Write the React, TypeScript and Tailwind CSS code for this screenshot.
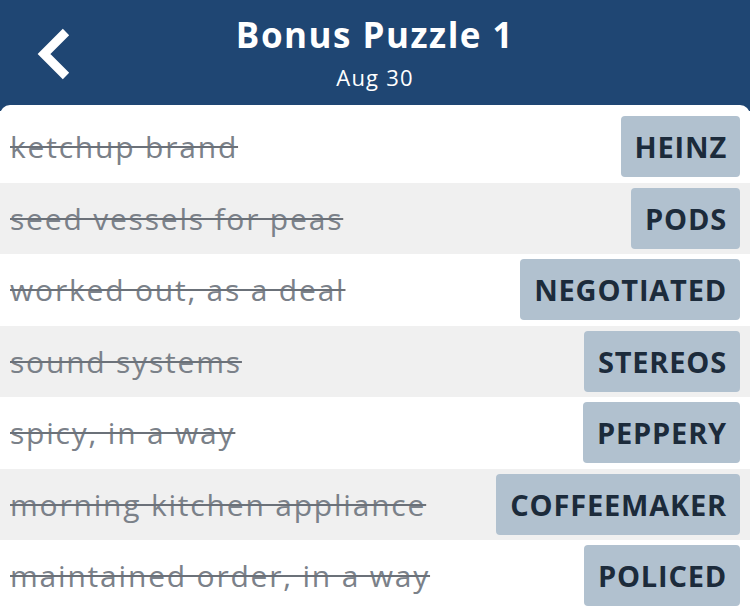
import React from "react";

const rows = [
  ["ketchup brand", "HEINZ"],
  ["seed vessels for peas", "PODS"],
  ["worked out, as a deal", "NEGOTIATED"],
  ["sound systems", "STEREOS"],
  ["spicy, in a way", "PEPPERY"],
  ["morning kitchen appliance", "COFFEEMAKER"],
  ["maintained order, in a way", "POLICED"],
];

export default function App() {
  return (
    <div
      className="w-[750px] h-[611px] overflow-hidden bg-[#1f4673]"
      style={{ fontFamily: "'Open Sans', 'Noto Sans', sans-serif" }}
    >
      <div className="relative h-[105px] flex flex-col items-center">
        <svg
          className="absolute left-[30px] top-[24px]"
          width="48"
          height="60"
          viewBox="0 0 48 60"
        >
          <polyline
            points="36,8 14,30 36,52"
            fill="none"
            stroke="white"
            strokeWidth="9"
            strokeLinecap="butt"
            strokeLinejoin="miter"
          />
        </svg>
        <div className="mt-[11px] text-white font-bold text-[35px] leading-[48px] tracking-[1.5px]">
          Bonus Puzzle 1
        </div>
        <div className="mt-[4px] text-white text-[22px] leading-[28px] tracking-[1.2px]">Aug 30</div>
      </div>
      <div className="bg-white rounded-t-[10px] pt-[6px] h-[506px]">
        {rows.map(([clue, ans], i) => (
          <div
            key={i}
            className={`h-[71.5px] flex items-center justify-between pl-[10px] pr-[10px] ${
              i % 2 === 1 ? "bg-[#f0f0f0]" : "bg-white"
            }`}
          >
            <span className="text-[30px] tracking-[1.8px] text-[#7b8189] line-through decoration-[#6b7179] decoration-2">
              {clue}
            </span>
            <span className="h-[61px] flex items-center pl-[14px] pr-[13px] rounded-[4px] bg-[#b1c1cf] text-[#1c2b3b] font-bold text-[29px] tracking-[0.8px]">
              {ans}
            </span>
          </div>
        ))}
      </div>
    </div>
  );
}
